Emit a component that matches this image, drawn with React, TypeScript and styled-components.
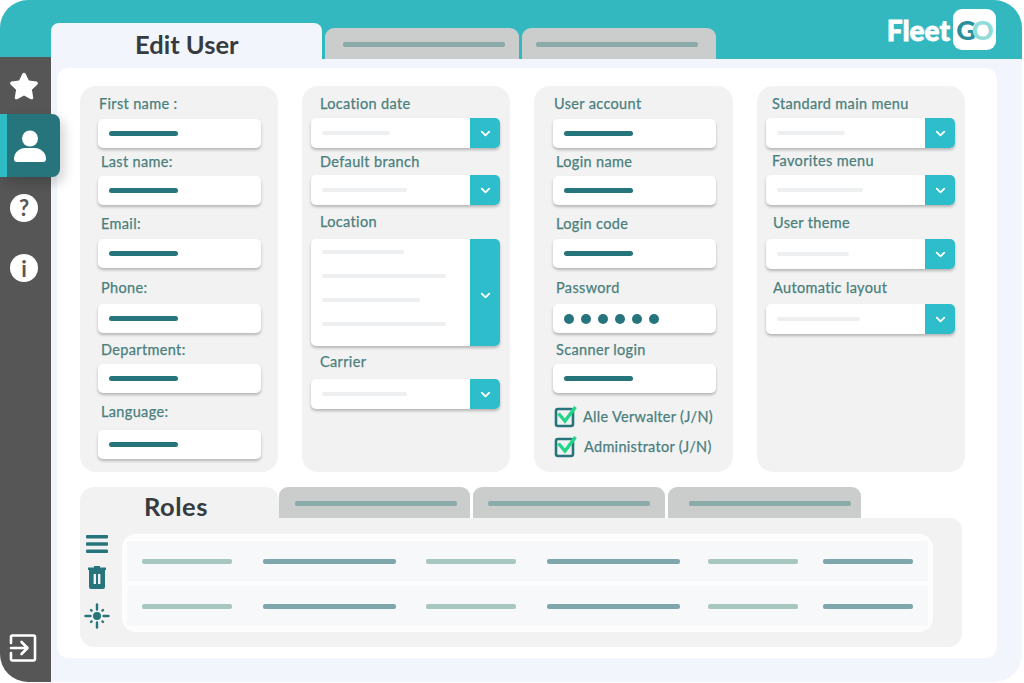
import React from 'react';
import styled, { createGlobalStyle } from 'styled-components';
import { ChevronDown } from 'lucide-react';
import { FaStar } from 'react-icons/fa';

const Global = createGlobalStyle`
  html, body { margin: 0; padding: 0; background: #fff; }
  body { font-family: "Lato", "Open Sans", sans-serif; }
`;

const Frame = styled.div`
  width: 1022px;
  height: 682px;
  border-radius: 28px;
  overflow: hidden;
  background: #f3f5fc;
  display: flex;
  flex-direction: column;
`;

const Header = styled.header`
  height: 59px;
  flex: none;
  background: #34b8c0;
  display: flex;
  align-items: flex-end;
  padding: 0 26px 0 51px;
  box-sizing: border-box;
`;

const ActiveTab = styled.div`
  width: 271px;
  height: 36px;
  margin-right: 3px;
  background: #f3f5fc;
  border-radius: 8px 8px 0 0;
  font-size: 25.5px;
  font-weight: 700;
  color: #363b3f;
  display: flex;
  align-items: center;
  padding: 6px 0 0 84px;
  box-sizing: border-box;
`;

const GreyTab = styled.div<{ $w: number; $barX: number }>`
  width: ${p => p.$w}px;
  height: 31px;
  margin-right: 3px;
  flex: none;
  background: #cbcccc;
  border-radius: 9px 9px 0 0;
  padding: 14px 0 0 ${p => p.$barX}px;
  box-sizing: border-box;
`;

const TabBar = styled.span`
  display: block;
  width: 162px;
  height: 5px;
  border-radius: 2px;
  background: #8aaba8;
`;

const Logo = styled.div`
  margin-left: auto;
  align-self: flex-start;
  margin-top: 9px;
  display: flex;
  align-items: center;
  gap: 3px;
`;

const LogoWord = styled.span`
  font-size: 28px;
  font-weight: 900;
  color: #fff;
  -webkit-text-stroke: 0.8px #fff;
`;

const LogoBox = styled.div`
  width: 43px;
  height: 41px;
  background: #fff;
  border-radius: 9px;
  display: flex;
  align-items: center;
  justify-content: center;
  font-size: 27px;
  font-weight: 900;
  letter-spacing: -4px;
  padding-right: 3px;
  box-sizing: border-box;
`;

const LogoG = styled.span`color: #2a8f9b;`;
const LogoO = styled.span`color: #8fdcd9;`;

const Body = styled.div`
  flex: 1;
  display: flex;
  min-height: 0;
`;

const Sidebar = styled.nav`
  width: 51px;
  flex: none;
  margin-top: -2px;
  background: #565656;
  display: flex;
  flex-direction: column;
  position: relative;
  z-index: 2;
  color: #fff;
`;

const SideItem = styled.div<{ $h: number }>`
  height: ${p => p.$h}px;
  display: flex;
  align-items: center;
  padding-left: 9px;
`;

const RoundGlyph = styled.span`
  width: 28px;
  height: 28px;
  margin-left: 1px;
  border-radius: 50%;
  background: #fff;
  color: #565656;
  font-size: 22px;
  font-weight: 700;
  display: flex;
  align-items: center;
  justify-content: center;
`;

const ActiveItem = styled.div`
  width: 60px;
  height: 63px;
  box-sizing: border-box;
  background: #26757c;
  border-left: 7px solid #2ebbc4;
  border-radius: 0 8px 8px 0;
  box-shadow: 4px 6px 12px rgba(0, 0, 0, 0.18);
  display: flex;
  align-items: center;
  padding-left: 7px;
`;

const ExitItem = styled.div`
  margin-top: auto;
  padding: 0 0 20px 9px;
  line-height: 0;
`;

const Main = styled.main`
  flex: 1;
  margin: 9px 25px 24px 6px;
  background: #fff;
  border-radius: 12px;
  padding: 18px 0 11px 23px;
  display: flex;
  flex-direction: column;
  gap: 15px;
`;

const Cards = styled.div`
  display: grid;
  grid-template-columns: 198px 208px 199px 208px;
  gap: 24px;
  height: 386px;
`;

const Card = styled.section`
  background: #f2f2f3;
  border-radius: 16px;
  padding-top: 1px;
`;

const FieldWrap = styled.div<{ $top: number; $inset: number }>`
  margin: ${p => p.$top}px 0 0 ${p => p.$inset}px;
  width: fit-content;
`;

const Label = styled.div<{ $gap: number; $indent: number }>`
  height: 16px;
  line-height: 17px;
  font-size: 14.5px;
  font-weight: 400;
  letter-spacing: 0.35px;
  color: #4a7f7c;
  white-space: nowrap;
  -webkit-text-stroke: 0.25px #4a7f7c;
  margin: 0 0 ${p => p.$gap}px ${p => p.$indent}px;
`;

const TextInput = styled.div`
  width: 163px;
  height: 29px;
  background: #fff;
  border-radius: 5px;
  box-shadow: 0 2px 3px rgba(0, 0, 0, 0.25);
  display: flex;
  align-items: center;
  padding-left: 11px;
  box-sizing: border-box;
  gap: 7px;
`;

const ValueBar = styled.span`
  width: 69px;
  height: 5px;
  border-radius: 3px;
  background: #26757c;
`;

const Dot = styled.span`
  width: 10px;
  height: 10px;
  border-radius: 50%;
  background: #26757c;
`;

const Select = styled.div<{ $h?: number }>`
  width: 189px;
  height: ${p => p.$h ?? 30}px;
  background: #fff;
  border-radius: 5px;
  box-shadow: 0 2px 3px rgba(0, 0, 0, 0.25);
  display: flex;
  overflow: hidden;
`;

const SelectBody = styled.div<{ $list?: boolean }>`
  flex: 1;
  display: flex;
  flex-direction: column;
  justify-content: ${p => (p.$list ? 'flex-start' : 'center')};
  padding: ${p => (p.$list ? '11px' : '0')} 0 0 11px;
  gap: 20px;
`;

const GhostBar = styled.span<{ $w: number }>`
  display: block;
  width: ${p => p.$w}px;
  height: 4px;
  border-radius: 2px;
  background: #eeeff0;
`;

const SelectButton = styled.div<{ $drop?: number }>`
  width: 30px;
  flex: none;
  background: #2ebdca;
  color: #fff;
  display: flex;
  align-items: center;
  justify-content: center;
  padding-top: ${p => p.$drop ?? 0}px;
`;

const CheckRow = styled.div<{ $top: number; $x: number; $gap: number }>`
  margin: ${p => p.$top}px 0 0 ${p => p.$x}px;
  display: flex;
  align-items: center;
  gap: ${p => p.$gap}px;
  font-size: 14.5px;
  letter-spacing: 0.3px;
  color: #4a7f7c;
  -webkit-text-stroke: 0.25px #4a7f7c;
  white-space: nowrap;
`;

const Roles = styled.section`
  width: 882px;
  height: 160px;
  display: flex;
  flex-direction: column;
`;

const RoleTabs = styled.div`
  display: flex;
  height: 31px;
  flex: none;
  align-items: flex-start;
`;

const RoleActive = styled.div`
  width: 199px;
  height: 31px;
  flex: none;
  background: #f2f2f3;
  border-radius: 14px 14px 0 0;
  font-size: 25.5px;
  font-weight: 700;
  letter-spacing: 0.5px;
  color: #363b3f;
  padding: 4px 0 0 64px;
  box-sizing: border-box;
  line-height: 31px;
`;

const RoleBody = styled.div`
  flex: 1;
  background: #f2f2f3;
  border-radius: 0 12px 14px 14px;
  display: flex;
  padding: 16px 29px 15px 0;
`;

const Tools = styled.div`
  width: 42px;
  flex: none;
  color: #26757c;
  line-height: 0;
  padding-right: 8px;
  box-sizing: border-box;
`;

const Tool = styled.div<{ $top: number }>`
  margin-top: ${p => p.$top}px;
  display: flex;
  justify-content: center;
`;

const Table = styled.div`
  flex: 1;
  background: #fdfdfe;
  border-radius: 14px;
  padding: 7px 5px 6px;
  display: flex;
  flex-direction: column;
  gap: 5px;
`;

const Row = styled.div`
  flex: 1;
  background: #f6f8fa;
  display: grid;
  grid-template-columns: 121px 163px 121px 161px 115px 90px;
  align-items: center;
  padding-left: 15px;
`;

const Cell = styled.span<{ $w: number; $dark: boolean }>`
  display: block;
  width: ${p => p.$w}px;
  height: 5px;
  border-radius: 2px;
  background: ${p => (p.$dark ? '#7da7ab' : '#a7c6bf')};
`;

type F = { label: string; top: number; gap: number; indent: number; ghost?: number; dots?: boolean };

const Field = ({ f, inset, select }: { f: F; inset: number; select?: boolean }) => (
  <FieldWrap $top={f.top} $inset={inset}>
    <Label $gap={f.gap} $indent={f.indent}>{f.label}</Label>
    {select ? (
      <Select>
        <SelectBody><GhostBar $w={f.ghost ?? 68} /></SelectBody>
        <SelectButton><ChevronDown size={15} strokeWidth={3} /></SelectButton>
      </Select>
    ) : (
      <TextInput>
        {f.dots ? [0, 1, 2, 3, 4, 5].map(i => <Dot key={i} />) : <ValueBar />}
      </TextInput>
    )}
  </FieldWrap>
);

const Check = () => (
  <svg width="24" height="24" viewBox="0 0 24 24" fill="none">
    <rect x="2" y="5" width="17" height="17" rx="2" stroke="#26757c" strokeWidth="2.6" />
    <path d="M4.5 9.5l6.5 7.5L21.5 3" stroke="#22d688" strokeWidth="3.4" />
  </svg>
);

const UserIcon = () => (
  <svg width="32" height="34" viewBox="0 0 32 34" fill="#fff">
    <circle cx="16" cy="9.5" r="8" />
    <path d="M0 30c0-7 6-11 11-11h10c5 0 11 4 11 11 0 2-1 3-3 3H3c-2 0-3-1-3-3z" />
  </svg>
);

const ExitIcon = () => (
  <svg width="28" height="28" viewBox="0 0 28 28" fill="none" stroke="#fff" strokeWidth="2.6" strokeLinecap="round" strokeLinejoin="round">
    <path d="M2 9V3a1.5 1.5 0 0 1 1.5-1.5h21A1.5 1.5 0 0 1 26 3v22a1.5 1.5 0 0 1-1.5 1.5h-21A1.5 1.5 0 0 1 2 25v-6" />
    <path d="M2 14h16M12.5 8l6 6-6 6" />
  </svg>
);

const MenuIcon = () => (
  <svg width="22" height="18" viewBox="0 0 22 18" fill="#26757c">
    <rect y="0" width="22" height="3.6" rx="1" />
    <rect y="7.2" width="22" height="3.6" rx="1" />
    <rect y="14.4" width="22" height="3.6" rx="1" />
  </svg>
);

const TrashIcon = () => (
  <svg width="18" height="23" viewBox="0 0 18 23" fill="#26757c">
    <path d="M0 1.5h6V0h6v1.5h6v2.5H0z" />
    <path d="M1 4h16v17a2 2 0 0 1-2 2H3a2 2 0 0 1-2-2z" />
    <rect x="5.6" y="8" width="2.4" height="10" fill="#f2f2f3" />
    <rect x="10" y="8" width="2.4" height="10" fill="#f2f2f3" />
  </svg>
);

const SunIcon = () => (
  <svg width="26" height="26" viewBox="0 0 26 26" fill="none" stroke="#26757c" strokeWidth="2.4" strokeLinecap="round">
    <circle cx="13" cy="13" r="4" fill="#26757c" stroke="none" />
    <path d="M13 1.5v5M13 19.5v5M1.5 13h5M19.5 13h5M7 7l.6.6M18.4 18.4l.6.6M19 7l-.6.6M7.6 18.4 7 19" />
  </svg>
);

const col1: F[] = [
  { label: 'First name :', top: 8, gap: 8, indent: 1 },
  { label: 'Last name:', top: 5, gap: 7, indent: 3 },
  { label: 'Email:', top: 10, gap: 8, indent: 3 },
  { label: 'Phone:', top: 11, gap: 9, indent: 3 },
  { label: 'Department:', top: 8, gap: 7, indent: 3 },
  { label: 'Language:', top: 10, gap: 11, indent: 3 },
];
const col3: F[] = [
  { label: 'User account', top: 8, gap: 8, indent: 1 },
  { label: 'Login name', top: 5, gap: 7, indent: 3 },
  { label: 'Login code', top: 10, gap: 8, indent: 3 },
  { label: 'Password', top: 11, gap: 9, indent: 3, dots: true },
  { label: 'Scanner login', top: 8, gap: 7, indent: 3 },
];
const col4: F[] = [
  { label: 'Standard main menu', top: 8, gap: 7, indent: 6, ghost: 68 },
  { label: 'Favorites menu', top: 4, gap: 7, indent: 6, ghost: 86 },
  { label: 'User theme', top: 9, gap: 9, indent: 7, ghost: 72 },
  { label: 'Automatic layout', top: 10, gap: 9, indent: 7, ghost: 83 },
];

const cellWidths = [90, 133, 90, 133, 90, 90];

export default function App() {
  return (
    <Frame>
      <Global />
      <Header>
        <ActiveTab>Edit User</ActiveTab>
        <GreyTab $w={194} $barX={18}><TabBar /></GreyTab>
        <GreyTab $w={194} $barX={14}><TabBar /></GreyTab>
        <Logo>
          <LogoWord>Fleet</LogoWord>
          <LogoBox><LogoG>G</LogoG><LogoO>O</LogoO></LogoBox>
        </Logo>
      </Header>
      <Body>
        <Sidebar>
          <SideItem $h={57}><FaStar size={30} /></SideItem>
          <ActiveItem><UserIcon /></ActiveItem>
          <SideItem $h={61}><RoundGlyph>?</RoundGlyph></SideItem>
          <SideItem $h={60}><RoundGlyph>i</RoundGlyph></SideItem>
          <ExitItem><ExitIcon /></ExitItem>
        </Sidebar>
        <Main>
          <Cards>
            <Card>{col1.map(f => <Field key={f.label} f={f} inset={18} />)}</Card>
            <Card>
              <Field inset={9} select f={{ label: 'Location date', top: 8, gap: 7, indent: 9, ghost: 68 }} />
              <Field inset={9} select f={{ label: 'Default branch', top: 5, gap: 6, indent: 9, ghost: 85 }} />
              <FieldWrap $top={8} $inset={9}>
                <Label $gap={10} $indent={9}>Location</Label>
                <Select $h={107}>
                  <SelectBody $list>
                    <GhostBar $w={82} />
                    <GhostBar $w={124} />
                    <GhostBar $w={98} />
                    <GhostBar $w={124} />
                  </SelectBody>
                  <SelectButton $drop={5}><ChevronDown size={15} strokeWidth={3} /></SelectButton>
                </Select>
              </FieldWrap>
              <Field inset={9} select f={{ label: 'Carrier', top: 7, gap: 10, indent: 9, ghost: 85 }} />
            </Card>
            <Card>
              {col3.map(f => <Field key={f.label} f={f} inset={19} />)}
              <CheckRow $top={11} $x={20} $gap={5}><Check />Alle Verwalter (J/N)</CheckRow>
              <CheckRow $top={6} $x={20} $gap={6}><Check />Administrator (J/N)</CheckRow>
            </Card>
            <Card>{col4.map(f => <Field key={f.label} f={f} inset={9} select />)}</Card>
          </Cards>
          <Roles>
            <RoleTabs>
              <RoleActive>Roles</RoleActive>
              <GreyTab $w={191} $barX={16}><TabBar /></GreyTab>
              <GreyTab $w={192} $barX={15}><TabBar /></GreyTab>
              <GreyTab $w={193} $barX={21}><TabBar /></GreyTab>
            </RoleTabs>
            <RoleBody>
              <Tools>
                <Tool $top={1}><MenuIcon /></Tool>
                <Tool $top={13}><TrashIcon /></Tool>
                <Tool $top={14}><SunIcon /></Tool>
              </Tools>
              <Table>
                {[0, 1].map(r => (
                  <Row key={r}>
                    {cellWidths.map((w, i) => <Cell key={i} $w={w} $dark={i % 2 === 1} />)}
                  </Row>
                ))}
              </Table>
            </RoleBody>
          </Roles>
        </Main>
      </Body>
    </Frame>
  );
}
